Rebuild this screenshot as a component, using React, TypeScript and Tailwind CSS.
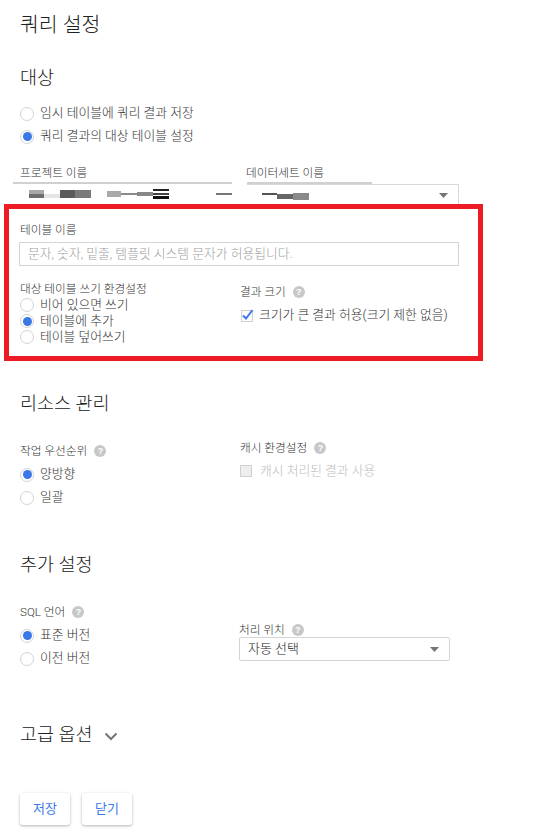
import React from 'react';

const Help = () => (
  <span className="ml-[7px] inline-flex h-[12px] w-[12px] shrink-0 items-center justify-center rounded-full bg-[#c8c8c8] font-['Liberation_Sans',sans-serif] text-[9px] font-bold leading-none text-white">
    ?
  </span>
);

const Radio = ({ checked, label, h = 'h-[23px]' }: { checked?: boolean; label: string; h?: string }) => (
  <div className={`flex items-center ${h}`}>
    <span className="flex h-[14px] w-[14px] shrink-0 items-center justify-center rounded-full border border-[#d4d4d4] bg-white">
      {checked && <span className="h-[9px] w-[9px] rounded-full bg-[#3b78e7]" />}
    </span>
    <span className="ml-[6px] text-[12.8px] leading-none text-[#333]">{label}</span>
  </div>
);

const Caret = () => (
  <svg width="9" height="5" viewBox="0 0 9 5" className="shrink-0">
    <path d="M0 0 L9 0 L4.5 5 Z" fill="#757575" />
  </svg>
);

export default function App() {
  return (
    <div className="min-h-[833px] w-[535px] bg-white font-[Roboto,'Noto_Sans_CJK_KR',sans-serif] font-light text-[#212121]">
      <div className="px-[20px] pt-[13px]">
        <h1 className="text-[20.5px] font-light leading-[24px]">쿼리 설정</h1>
        <h2 className="mt-[30px] text-[18.5px] font-light leading-[22px]">대상</h2>
        <div className="mt-[13px]">
          <Radio label="임시 테이블에 쿼리 결과 저장" />
          <Radio checked label="쿼리 결과의 대상 테이블 설정" />
        </div>
      </div>

      {/* project / dataset */}
      <div className="mt-[16px] flex">
        <div className="ml-[13px] w-[219px]">
          <div className="pl-[7px] text-[11.7px] leading-[18px] text-[#333]">프로젝트 이름</div>
          <div className="h-[2px] bg-[#d0d0d0]" />
          <div className="flex h-[20px] items-center pl-[16px]">
            <div className="flex h-[8px] w-[15px] flex-col">
              <div className="h-[4px] bg-[#a8a8a8]" />
              <div className="h-[4px] bg-[#6e6e6e]" />
            </div>
            <div className="mt-[3px] h-[4px] w-[16px] bg-[#e4e4e4]" />
            <div className="h-[8px] w-[15px] bg-[#5a5a5a]" />
            <div className="h-[8px] w-[16px] bg-[#7a7a7a]" />
            <div className="ml-[16px] h-[6px] w-[14px] bg-[#aaa]" />
            <div className="h-[2px] w-[16px] bg-[#8a8a8a]" />
            <div className="h-[4px] w-[16px] bg-[#888]" />
            <div className="flex h-[10px] w-[16px] flex-col justify-between">
              <div className="h-[2px] bg-[#222]" />
              <div className="h-[2px] bg-[#444]" />
              <div className="h-[3px] bg-[#111]" />
            </div>
            <div className="ml-[47px] h-[2px] w-[16px] bg-[#777]" />
          </div>
        </div>
        <div className="ml-[14px] w-[213px]">
          <div className="text-[11.7px] leading-[18px] text-[#333]">데이터세트 이름</div>
          <div className="ml-[1px] h-[2px] w-[125px] bg-[#d0d0d0]" />
          <div className="ml-[1px] flex h-[20px] items-start border-t border-r border-[#d8d8d8]">
            <div className="ml-[15px] mt-[8px] h-[2px] w-[15px] bg-[#555]" />
            <div className="mt-[9px] h-[5px] w-[16px] bg-[#666]" />
            <div className="mt-[8px] h-[7px] w-[16px] bg-[#8a8a8a]" />
            <div className="ml-auto mr-[10px] mt-[8px]">
              <Caret />
            </div>
          </div>
        </div>
      </div>

      {/* highlighted block */}
      <div className="ml-[4px] w-[479px] border-[5px] border-[#ed1c24] pb-[11px] pl-[11px] pt-[13px]">
        <div className="text-[11.7px] leading-[16px] text-[#333]">테이블 이름</div>
        <div className="ml-[-1px] mt-[4px] flex h-[24px] w-[440px] items-center border border-[#d4d4d4] pl-[8px] text-[12.8px] text-[#9e9e9e]">
          문자, 숫자, 밑줄, 템플릿 시스템 문자가 허용됩니다.
        </div>
        <div className="mt-[16px] flex">
          <div className="w-[220px]">
            <div className="text-[11.7px] leading-[15px] text-[#333]">대상 테이블 쓰기 환경설정</div>
            <Radio h="h-[16px]" label="비어 있으면 쓰기" />
            <Radio h="h-[16px]" checked label="테이블에 추가" />
            <Radio h="h-[16px]" label="테이블 덮어쓰기" />
          </div>
          <div className="pt-[2px]">
            <div className="flex items-center text-[11.7px] leading-[16px] text-[#333]">
              결과 크기
              <Help />
            </div>
            <div className="mt-[6px] flex h-[18px] items-center">
              <svg width="14" height="14" viewBox="0 0 14 14" className="shrink-0">
                <rect x="1.5" y="2.5" width="11" height="11" fill="#fff" stroke="#d0d0d0" />
                <path d="M3 7.5 L6 10.5 L12.5 2" fill="none" stroke="#3b78e7" strokeWidth="2" />
              </svg>
              <span className="ml-[5px] text-[12.8px] leading-none text-[#333]">크기가 큰 결과 허용(크기 제한 없음)</span>
            </div>
          </div>
        </div>
      </div>

      <div className="px-[20px]">
        <h2 className="mt-[32px] text-[18.5px] font-light leading-[22px]">리소스 관리</h2>
        <div className="mt-[28px] flex">
          <div className="w-[220px]">
            <div className="flex items-center text-[11.7px] leading-[16px] text-[#333]">
              작업 우선순위
              <Help />
            </div>
            <div className="mt-[4px]">
              <Radio checked label="양방향" />
              <Radio label="일괄" />
            </div>
          </div>
          <div className="mt-[-3px]">
            <div className="flex items-center text-[11.7px] leading-[16px] text-[#333]">
              캐시 환경설정
              <Help />
            </div>
            <div className="mt-[5px] flex h-[20px] items-center">
              <span className="h-[12px] w-[12px] border border-[#d0d0d0] bg-[#eee]" />
              <span className="ml-[8px] text-[12.8px] leading-none text-[#bdbdbd]">캐시 처리된 결과 사용</span>
            </div>
          </div>
        </div>

        <h2 className="mt-[45px] text-[18.5px] font-light leading-[22px]">추가 설정</h2>
        <div className="mt-[28px] flex">
          <div className="w-[219px]">
            <div className="flex items-center text-[11.7px] leading-[16px] text-[#333]">
              SQL 언어
              <Help />
            </div>
            <div className="mt-[4px]">
              <Radio checked label="표준 버전" />
              <Radio label="이전 버전" />
            </div>
          </div>
          <div className="pt-[19px]">
            <div className="flex items-center text-[11.7px] leading-[14px] text-[#333]">
              처리 위치
              <Help />
            </div>
            <div className="flex h-[24px] w-[211px] items-center justify-between rounded-[2px] border border-[#d4d4d4] pl-[8px] pr-[10px] text-[13px] text-[#212121]">
              자동 선택
              <Caret />
            </div>
          </div>
        </div>

        <div className="mt-[54px] flex items-center">
          <h2 className="text-[18.5px] font-light leading-[22px]">고급 옵션</h2>
          <svg width="14" height="9" viewBox="0 0 14 9" className="ml-[11px] mt-[2px]">
            <path d="M1.5 1.5 L7 7 L12.5 1.5" fill="none" stroke="#757575" strokeWidth="2" />
          </svg>
        </div>

        <div className="mt-[47px] flex gap-[12px] pb-[7px]">
          <button className="h-[32px] w-[50px] rounded-[3px] bg-white text-[13px] font-normal text-[#3b78e7] shadow-[0_1px_3px_rgba(0,0,0,0.3)]">
            저장
          </button>
          <button className="h-[32px] w-[50px] rounded-[3px] bg-white text-[13px] font-normal text-[#3b78e7] shadow-[0_1px_3px_rgba(0,0,0,0.3)]">
            닫기
          </button>
        </div>
      </div>
    </div>
  );
}
